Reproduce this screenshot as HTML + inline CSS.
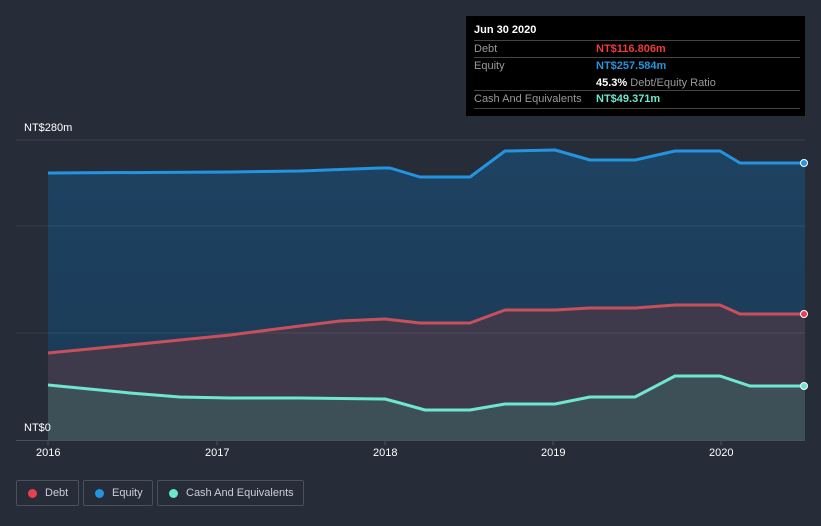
<!DOCTYPE html>
<html><head><style>
body{margin:0;width:821px;height:526px;background:#262c38;font-family:"Liberation Sans",sans-serif;overflow:hidden;position:relative}
.t{position:absolute;color:#fff;font-size:12px}
.tip{position:absolute;left:466px;top:16px;width:339px;height:100px;background:#000}
.row{position:absolute;left:8px;width:326px;border-top:1px solid #444;font-size:11px;color:#999}
.leg{position:absolute;top:480px;height:26px;border:1px solid #4a505c;border-radius:2px;color:#ccd;font-size:11px;line-height:25px;box-sizing:border-box;white-space:nowrap}
.leg i{position:absolute;left:11px;top:8px;width:9px;height:9px;border-radius:50%}
</style></head><body>
<svg width="821" height="526" style="position:absolute;left:0;top:0">
<defs>
<linearGradient id="g" x1="0" y1="0" x2="0" y2="1"><stop offset="0" stop-color="#1e4262"/><stop offset="1" stop-color="#1a3a55"/></linearGradient>
</defs>
<line x1="16" y1="140" x2="805" y2="140" stroke="#3a4150"/>
<polygon fill="url(#g)" points="48,173 230,172 300,171 380,168 390,168 420,177 470,177 505,151 555,150 590,160 635,160 675,151 720,151 740,163 805,163 805,440 48,440"/>
<polygon fill="#3e3a4c" points="48,353 130,345 230,335 300,326 340,321 385,319 420,323 470,323 505,310 555,310 590,308 635,308 675,305 720,305 740,314 805,314 805,440 48,440"/>
<polygon fill="#3d5058" points="48,385 130,393 180,397 230,398 300,398 385,399 400,403 425,410 470,410 505,404 555,404 590,397 635,397 675,376 720,376 750,386 805,386 805,440 48,440"/>
<line x1="16" y1="226" x2="805" y2="226" stroke="#ffffff" stroke-opacity=".08"/>
<line x1="16" y1="333" x2="805" y2="333" stroke="#ffffff" stroke-opacity=".08"/>
<polyline fill="none" stroke="#2394df" stroke-width="3" stroke-linejoin="round" points="48,173 230,172 300,171 380,168 390,168 420,177 470,177 505,151 555,150 590,160 635,160 675,151 720,151 740,163 805,163"/>
<polyline fill="none" stroke="#c8505c" stroke-width="3" stroke-linejoin="round" points="48,353 130,345 230,335 300,326 340,321 385,319 420,323 470,323 505,310 555,310 590,308 635,308 675,305 720,305 740,314 805,314"/>
<polyline fill="none" stroke="#6ee6d0" stroke-width="3" stroke-linejoin="round" points="48,385 130,393 180,397 230,398 300,398 385,399 400,403 425,410 470,410 505,404 555,404 590,397 635,397 675,376 720,376 750,386 805,386"/>
<line x1="16" y1="440.5" x2="805" y2="440.5" stroke="#4a505c"/>
<g stroke="#4a505c"><line x1="48" y1="440" x2="48" y2="445"/><line x1="217" y1="440" x2="217" y2="445"/><line x1="385" y1="440" x2="385" y2="445"/><line x1="553" y1="440" x2="553" y2="445"/><line x1="721" y1="440" x2="721" y2="445"/></g>
<circle cx="804" cy="163" r="3.5" fill="#2394df" stroke="#fff" stroke-width="1"/>
<circle cx="804" cy="314" r="3.5" fill="#e84050" stroke="#fff" stroke-width="1"/>
<circle cx="804" cy="386" r="3.5" fill="#6ee6d0" stroke="#fff" stroke-width="1"/>
</svg>
<div class="t" style="left:24px;top:122px;font-size:11px">NT$280m</div>
<div class="t" style="left:24px;top:422px;font-size:11px">NT$0</div>
<div class="t" style="left:36px;top:447px;font-size:11px">2016</div>
<div class="t" style="left:205px;top:447px;font-size:11px">2017</div>
<div class="t" style="left:373px;top:447px;font-size:11px">2018</div>
<div class="t" style="left:541px;top:447px;font-size:11px">2019</div>
<div class="t" style="left:709px;top:447px;font-size:11px">2020</div>
<div class="tip">
<div style="position:absolute;left:8px;top:8px;color:#fff;font-size:11px;font-weight:bold">Jun 30 2020</div>
<div class="row" style="top:24px;height:17px;line-height:17px">Debt<span style="position:absolute;left:122px;color:#ef3b3b;font-weight:bold">NT$116.806m</span></div>
<div class="row" style="top:41px;height:33px;line-height:17px">Equity<span style="position:absolute;left:122px;color:#2394df;font-weight:bold">NT$257.584m</span><br><span style="position:absolute;left:122px;top:17px"><b style="color:#fff">45.3%</b> Debt/Equity Ratio</span></div>
<div class="row" style="top:74px;height:17px;line-height:17px;border-bottom:1px solid #444">Cash And Equivalents<span style="position:absolute;left:122px;color:#6ee6d0;font-weight:bold">NT$49.371m</span></div>
</div>
<div class="leg" style="left:16px;width:63px"><i style="background:#e84050"></i><span style="margin-left:28px">Debt</span></div>
<div class="leg" style="left:83px;width:70px"><i style="background:#2394df"></i><span style="margin-left:28px">Equity</span></div>
<div class="leg" style="left:157px;width:147px"><i style="background:#6ee6d0"></i><span style="margin-left:28px">Cash And Equivalents</span></div>
</body></html>
